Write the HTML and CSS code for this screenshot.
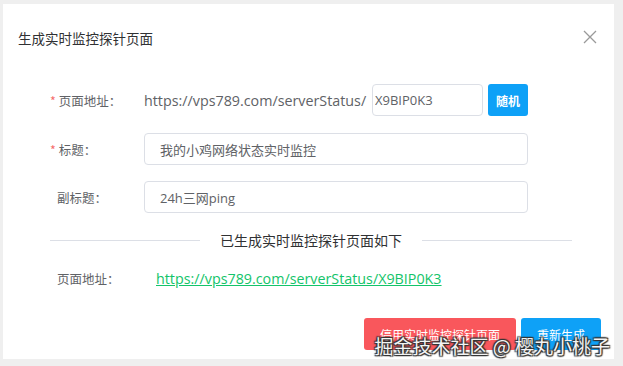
FILE: index.html
```html
<!DOCTYPE html>
<html lang="zh-CN">

<head>
    <meta charset="UTF-8">
    <meta name="viewport" content="width=device-width, initial-scale=1.0">
    <title>生成实时监控探针页面</title>
    <link rel="stylesheet" href="styles.css">
</head>

<body>
    <div class="dialog">
        <div class="dialog-header">
            <span class="dialog-title">生成实时监控探针页面</span>
            <span class="dialog-close">
                <svg width="14" height="14" viewBox="0 0 14 14">
                    <path d="M1 1 L13 13 M13 1 L1 13" stroke="#9a9a9a" stroke-width="1.3" fill="none"/>
                </svg>
            </span>
        </div>

        <div class="dialog-body">
            <div class="form-row">
                <label class="form-label"><span class="required">*</span>页面地址：</label>
                <div class="form-content">
                    <span class="url-prefix">https://vps789.com/serverStatus/</span>
                    <input type="text" class="code-input" value="X9BIP0K3">
                    <button class="btn btn-blue btn-small">随机</button>
                </div>
            </div>
            <div class="form-row">
                <label class="form-label"><span class="required">*</span>标题：</label>
                <div class="form-content">
                    <input type="text" class="text-input" value="我的小鸡网络状态实时监控">
                </div>
            </div>
            <div class="form-row">
                <label class="form-label">副标题：</label>
                <div class="form-content">
                    <input type="text" class="text-input" value="24h三网ping">
                </div>
            </div>

            <div class="divider">
                <span>已生成实时监控探针页面如下</span>
            </div>

            <div class="result-row">
                <span class="form-label">页面地址：</span>
                <a class="result-link" href="#">https://vps789.com/serverStatus/X9BIP0K3</a>
            </div>
        </div>

        <div class="dialog-footer">
            <button class="btn btn-red">停用实时监控探针页面</button>
            <button class="btn btn-blue">重新生成</button>
        </div>

        <div class="watermark">掘金技术社区 @ 樱丸小桃子</div>
    </div>
</body>

</html>
```

FILE: styles.css
```css
* {
    margin: 0;
    padding: 0;
    box-sizing: border-box;
}

body {
    font-family: 'Open Sans', 'Noto Sans CJK SC', sans-serif;
    background-color: #efefef;
    width: 623px;
    height: 366px;
    overflow: hidden;
}

.dialog {
    position: relative;
    background-color: #ffffff;
    width: 611px;
    height: 355px;
    margin: 4px 0 0 3px;
    display: flex;
    flex-direction: column;
}

.dialog-header {
    display: flex;
    justify-content: space-between;
    align-items: center;
    padding: 19px 17px 0 15px;
    height: 48px;
}

.dialog-title {
    font-family: 'Noto Sans CJK SC', sans-serif;
    font-size: 13.5px;
    color: #303133;
}

.dialog-close {
    display: flex;
    margin-top: -2px;
}

.dialog-body {
    padding: 32px 0 0 47px;
}

.form-row {
    display: flex;
    align-items: center;
    height: 32px;
    margin-bottom: 17px;
}

.form-row:nth-child(2) {
    margin-bottom: 16px;
}

.form-label {
    width: 94px;
    padding-left: 7px;
    font-family: 'Noto Sans CJK SC', sans-serif;
    font-size: 12.5px;
    color: #606266;
}

.required {
    color: #f56c6c;
    margin-left: -7px;
    margin-right: 3px;
}

.form-content {
    display: flex;
    align-items: center;
    width: 384px;
}

.url-prefix {
    font-size: 14.3px;
    color: #606266;
    width: 228px;
    white-space: nowrap;
}

.code-input {
    width: 111px;
    height: 32px;
    border: 1px solid #dcdfe6;
    border-radius: 4px;
    padding: 0 2px;
    font-family: 'Open Sans', sans-serif;
    font-size: 13px;
    color: #606266;
    outline: none;
}

.text-input {
    width: 384px;
    height: 32px;
    border: 1px solid #dcdfe6;
    border-radius: 4px;
    padding: 0 15px;
    font-family: 'Open Sans', 'Noto Sans CJK SC', sans-serif;
    font-size: 13px;
    color: #606266;
    outline: none;
}

.btn {
    border: none;
    border-radius: 3px;
    color: #ffffff;
    font-family: 'Noto Sans CJK SC', sans-serif;
    font-size: 12px;
    height: 32px;
    cursor: pointer;
}

.btn-small {
    width: 40px;
    margin-left: 5px;
    font-weight: bold;
}

.btn-blue {
    background-color: #0ea1f7;
}

.btn-red {
    background-color: #f9575c;
}

.divider {
    display: flex;
    align-items: center;
    width: 522px;
    margin-top: 11px;
    font-family: 'Noto Sans CJK SC', sans-serif;
    font-size: 14px;
    color: #303133;
}

.divider::before,
.divider::after {
    content: '';
    flex: 1;
    height: 1px;
    background-color: #dcdfe6;
}

.divider span {
    padding: 0 20px;
}

.result-row {
    display: flex;
    align-items: center;
    margin-top: 19px;
}

.result-link {
    font-size: 14.3px;
    color: #13c46a;
    text-decoration: underline;
    margin-left: 12px;
}

.dialog-footer {
    display: flex;
    justify-content: flex-end;
    gap: 5px;
    padding: 30px 13px 0 0;
}

.dialog-footer .btn-red {
    width: 152px;
}

.dialog-footer .btn-blue {
    width: 80px;
}

.watermark {
    position: absolute;
    right: 4px;
    bottom: 0;
    font-family: 'Noto Sans CJK SC', sans-serif;
    font-size: 19px;
    line-height: 26px;
    color: #f4f4f4;
    text-shadow: 0 0 2px #333, 1px 1px 1px #333, -1px -1px 1px #333, 1px -1px 1px #333, -1px 1px 1px #333;
}
```
